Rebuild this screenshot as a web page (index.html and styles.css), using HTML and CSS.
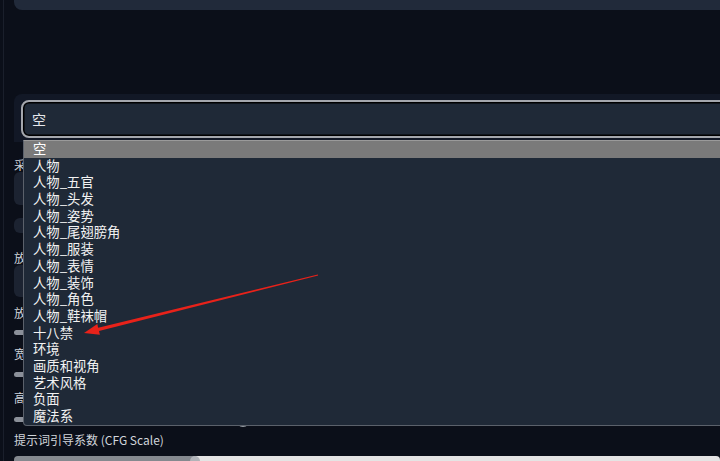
FILE: index.html
```html
<!DOCTYPE html>
<html lang="zh-CN">
<head>
<meta charset="utf-8">
<title>下拉选择</title>
<link rel="stylesheet" href="styles.css">
</head>
<body>
<div class="app">
  <div class="gutter"></div>
  <main class="main">
    <div class="top-panel"></div>
    <section class="select-panel">
      <div class="select-input">空</div>
    </section>
    <section class="form">
      <div class="label l-sampler">采样方法 (Sampler)</div>
      <div class="box box-tall"></div>
      <div class="box box-small"></div>
      <div class="label l-upscaler">放大算法</div>
      <div class="box box-mid"></div>
      <div class="label l-scale">放大倍数</div>
      <div class="slider s-scale"><span class="thumb" style="left:200px"></span></div>
      <div class="label l-width">宽度</div>
      <div class="slider s-width"><span class="thumb" style="left:215px"></span></div>
      <div class="label l-height">高度</div>
      <div class="slider s-height"><span class="thumb" style="left:222px"></span></div>
      <div class="label l-cfg">提示词引导系数 (CFG Scale)</div>
      <div class="cfg-track"><span class="cfg-thumb"></span></div>
    </section>
  </main>
</div>

<ul class="dropdown">
  <li class="active">空</li>
  <li>人物</li>
  <li>人物_五官</li>
  <li>人物_头发</li>
  <li>人物_姿势</li>
  <li>人物_尾翅膀角</li>
  <li>人物_服装</li>
  <li>人物_表情</li>
  <li>人物_装饰</li>
  <li>人物_角色</li>
  <li>人物_鞋袜帽</li>
  <li>十八禁</li>
  <li>环境</li>
  <li>画质和视角</li>
  <li>艺术风格</li>
  <li>负面</li>
  <li>魔法系</li>
</ul>

<svg class="arrow" width="720" height="461" viewBox="0 0 720 461" aria-hidden="true">
  <polygon points="97.2,327.9 98.0,331.3 318.1,275.5 317.9,274.5" fill="#e8221a"/>
  <polygon points="84,333 99.9,334.7 97.3,324.1" fill="#e8221a"/>
</svg>
</body>
</html>
```

FILE: styles.css
```css
html, body {
  margin: 0;
  padding: 0;
}

body {
  width: 720px;
  height: 461px;
  overflow: hidden;
  background: #0b0f19;
  position: relative;
  font-family: "Noto Sans CJK SC", "Noto Sans", sans-serif;
}

.app {
  display: flex;
  align-items: flex-start;
  height: 461px;
}

.gutter {
  flex: none;
  align-self: stretch;
  width: 10px;
  margin-left: 3px;
  border-left: 1px solid #1a1f2b;
}

.main {
  flex: 1;
  min-width: 0;
  display: flex;
  flex-direction: column;
}

.main > *,
.form > * {
  flex: none;
}

.top-panel {
  height: 10px;
  background: #212a3a;
  border-bottom-left-radius: 8px;
}

.select-panel {
  margin-top: 84px;
  background: #121826;
  border-top-left-radius: 8px;
  padding: 6px 0 4px 7px;
}

.select-input {
  box-sizing: border-box;
  height: 38px;
  margin-right: -14px;
  border: 2px solid #a4a7ad;
  border-radius: 8px;
  box-shadow: inset 0 0 0 1.5px #000;
  background: #1f2937;
  color: #e5e7eb;
  font-size: 14px;
  line-height: 34px;
  padding-left: 9px;
}

.form {
  display: flex;
  flex-direction: column;
}

.label {
  height: 15px;
  line-height: 15px;
  font-size: 12px;
  color: #d1d5db;
  white-space: nowrap;
}

.l-sampler { margin-top: 15px; }
.l-upscaler { margin-top: 17px; }
.l-scale { margin-top: 8px; }
.l-width { margin-top: 11px; }
.l-height { margin-top: 13px; }
.l-cfg { margin-top: 10px; }

.box {
  background: #1c2331;
  border-radius: 6px;
}

.box-tall { height: 33px; }
.box-small { height: 15px; margin-top: 13px; width: 200px; }
.box-mid { height: 32px; }

.slider {
  position: relative;
  height: 5px;
  border-radius: 3px;
  background: #8b9099;
}

.s-scale { margin-top: 10px; }
.s-width { margin-top: 11px; }
.s-height { margin-top: 12px; }

.thumb {
  position: absolute;
  top: -4.5px;
  width: 14px;
  height: 14px;
  border-radius: 50%;
  background: #9aa0a8;
}

.cfg-track {
  position: relative;
  margin-top: 9px;
  height: 8px;
  border-radius: 4px;
  background: linear-gradient(to right, #85898f 0 182px, #e4e4e4 182px);
}

.cfg-thumb {
  position: absolute;
  left: 176px;
  top: 0;
  width: 10px;
  height: 10px;
  border-radius: 50%;
  background: #b0b3b8;
}

.dropdown {
  position: absolute;
  left: 23px;
  top: 140px;
  right: -20px;
  margin: 0;
  padding: 0;
  list-style: none;
  background: #1f2937;
  border: 1px solid #5b616b;
  border-top-color: #9a9a9a;
  border-bottom-left-radius: 4px;
  font-size: 13.33px;
  color: #f2f2f2;
}

.dropdown li {
  height: 16.7px;
  line-height: 16.7px;
  padding-left: 9px;
  white-space: nowrap;
}

.dropdown li.active {
  background: #7a7a7a;
  color: #ffffff;
}

.arrow {
  position: absolute;
  left: 0;
  top: 0;
  pointer-events: none;
}
```
